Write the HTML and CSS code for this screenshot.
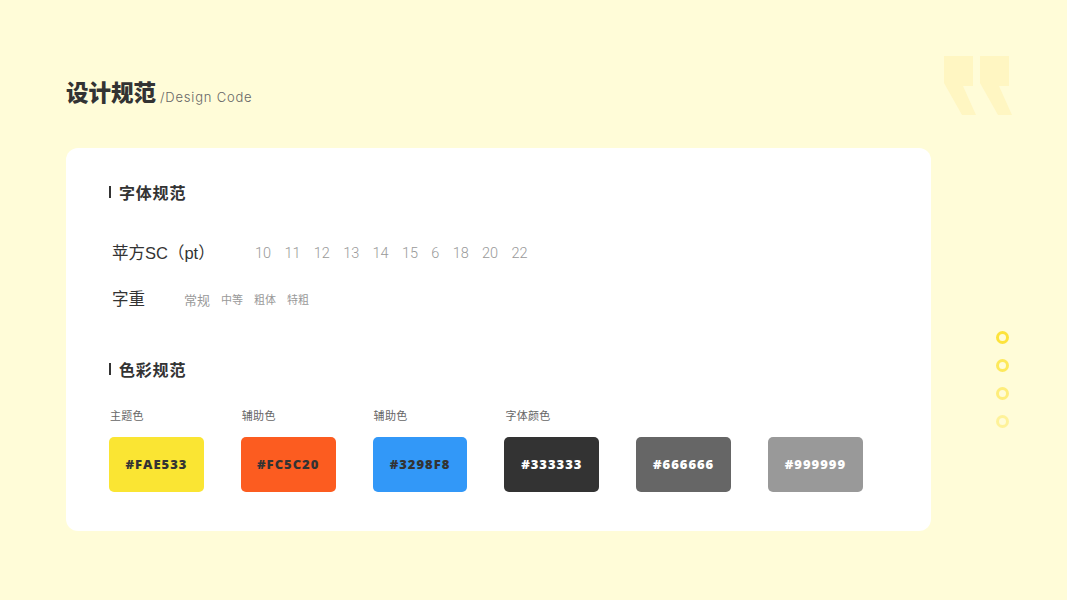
FILE: index.html
```html
<!DOCTYPE html>
<html lang="zh-CN">
<head>
<meta charset="utf-8">
<title>设计规范</title>
<link rel="stylesheet" href="styles.css">
</head>
<body>
<svg class="quote" width="70" height="60" viewBox="0 0 70 60" aria-hidden="true">
  <path d="M0 0H29V30H19L32 59H18L0 27Z"/>
  <path d="M36 0H65V30H55L68 59H54L36 27Z"/>
</svg>
<div class="dots">
  <span class="dot d1"></span>
  <span class="dot d2"></span>
  <span class="dot d3"></span>
  <span class="dot d4"></span>
</div>
<header class="page-head">
  <h1>设计规范</h1>
  <span class="sub">/Design Code</span>
</header>
<main class="card">
  <h2 class="sec">字体规范</h2>
  <div class="row row-size">
    <span class="row-label w-size">苹方SC（pt）</span>
    <ul class="sizes">
      <li>10</li><li>11</li><li>12</li><li>13</li><li>14</li><li>15</li><li>6</li><li>18</li><li>20</li><li>22</li>
    </ul>
  </div>
  <div class="row row-weight">
    <span class="row-label w-weight">字重</span>
    <span class="w-main">常规</span>
    <span class="w-item">中等</span>
    <span class="w-item">粗体</span>
    <span class="w-item">特粗</span>
  </div>
  <h2 class="sec sec-color">色彩规范</h2>
  <div class="swatches">
    <div class="sw-col"><span class="sw-label">主题色</span><div class="sw dark-text c1">#FAE533</div></div>
    <div class="sw-col"><span class="sw-label">辅助色</span><div class="sw dark-text c2">#FC5C20</div></div>
    <div class="sw-col"><span class="sw-label">辅助色</span><div class="sw dark-text c3">#3298F8</div></div>
    <div class="sw-col"><span class="sw-label">字体颜色</span><div class="sw c4">#333333</div></div>
    <div class="sw-col"><span class="sw-label"></span><div class="sw c5">#666666</div></div>
    <div class="sw-col"><span class="sw-label"></span><div class="sw c6">#999999</div></div>
  </div>
</main>
</body>
</html>
```
FILE: styles.css
```css
* { box-sizing: border-box; }
html, body { margin: 0; height: 100%; }
body {
  position: relative;
  width: 1067px;
  height: 600px;
  overflow: hidden;
  padding: 0 0 0 66px;
  background: #fffcd8;
  color: #333;
  font-family: "Noto Sans CJK SC", "Noto Sans", sans-serif;
}
.quote { position: absolute; left: 944px; top: 56px; fill: #fff6c2; }
.dots { position: absolute; left: 995.5px; top: 331px; display: flex; flex-direction: column; gap: 15px; }
.dot { width: 13px; height: 13px; border-radius: 50%; border: 3.5px solid #fde33c; }
.d2 { opacity: .8; }
.d3 { opacity: .6; }
.d4 { opacity: .4; }

.page-head { display: flex; align-items: flex-start; height: 148px; padding-top: 74px; }
h1 { margin: 0; font-size: 22.5px; line-height: 34px; font-weight: 900; letter-spacing: 0; }
.sub {
  margin: 13px 0 0 4px;
  font: 300 13px/20px Inter, "Noto Sans", sans-serif;
  letter-spacing: .8px;
  color: #666;
}

.card {
  width: 865px;
  height: 383px;
  padding: 32px 43px 0;
  background: #fff;
  border-radius: 12px;
}
.sec {
  display: flex;
  align-items: center;
  height: 24px;
  margin: 0;
  font-size: 16px;
  font-weight: 700;
  letter-spacing: .8px;
}
.sec::before {
  content: "";
  width: 2px;
  height: 12px;
  margin-right: 8px;
  background: #333;
}
.row { display: flex; align-items: center; margin-left: 3px; }
.row-label {
  font-family: "Liberation Sans", "Noto Sans CJK SC", sans-serif;
  font-size: 16.5px;
  line-height: 24px;
  color: #333;
}
.row-size { margin-top: 37px; height: 24px; }
.w-size { width: 143px; }
.sizes {
  display: flex;
  gap: 13.3px;
  margin: 0;
  padding: 2px 0 0;
  list-style: none;
  font: 300 14.5px/20px Roboto, "Liberation Sans", sans-serif;
  color: #999;
}
.row-weight { margin-top: 22px; height: 24px; }
.w-weight { width: 72px; }
.w-main { font-size: 13px; color: #999; margin-right: 11px; }
.w-item { font-size: 11px; color: #999; margin-right: 11px; }

.sec-color { margin-top: 46px; }
.swatches { display: flex; gap: 37px; margin-top: 25px; }
.sw-col { display: flex; flex-direction: column; width: 94.8px; }
.sw-label { height: 18px; margin-left: 1px; font-size: 11px; line-height: 18px; color: #666; letter-spacing: .3px; }
.sw {
  display: flex;
  align-items: center;
  justify-content: center;
  height: 54.5px;
  margin-top: 13px;
  border-radius: 5px;
  font: 800 13px/1 "Open Sans", sans-serif;
  letter-spacing: 1px;
  color: #fff;
}
.dark-text { color: #333; }
.c1 { background: #fae533; }
.c2 { background: #fc5c20; }
.c3 { background: #3298f8; }
.c4 { background: #333; }
.c5 { background: #666; }
.c6 { background: #999; }
```
